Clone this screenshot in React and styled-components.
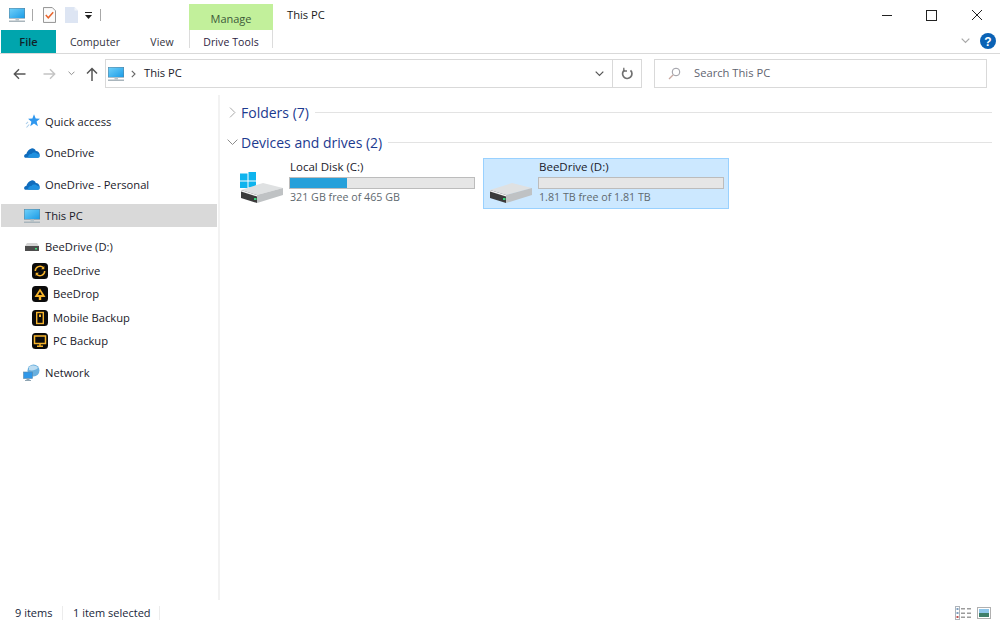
import React from "react";
import styled, { createGlobalStyle } from "styled-components";

const Global = createGlobalStyle`
  html, body { margin: 0; padding: 0; background: #fff; }
  #root { width: 1000px; height: 625px; overflow: hidden; }
  * { box-sizing: border-box; }
`;

const Window = styled.div`
  width: 1000px; height: 625px; display: flex; flex-direction: column; background: #fff;
  font-family: "Open Sans", "Noto Sans", sans-serif; font-size: 11.2px; color: #1a1a2a;
`;
const TitleRow = styled.div`height: 30px; padding-top: 4px; display: flex; align-items: stretch;`;
const Qat = styled.div`width: 189px; display: flex; align-items: center; padding: 0 0 4px 8px;`;
const QatSep = styled.span`width: 1px; height: 12px; background: #a8a8a8; margin: ${p => p.$m};`;
const Manage = styled.div`width: 84px; background: #c2f09b; color: #3d5a3a; display: flex; align-items: center; justify-content: center; padding-top: 2px; font-size: 11px;`;
const Title = styled.div`margin-left: 14px; color: #1a1a1a; padding-top: 1px; line-height: 20px; flex: 1;`;
const WinControls = styled.div`display: flex; padding: 1px 17px 0 0; gap: 34px; align-items: flex-start;`;
const TabRow = styled.div`height: 24px; display: flex; align-items: flex-start; border-bottom: 1px solid #d9d9d9; padding-left: 1px;`;
const FileTab = styled.div`width: 55px; height: 23px; background: #00a5ad; color: #10222a; font-weight: 600; display: flex; align-items: center; justify-content: center; font-size: 11px;`;
const Tab = styled.div`width: ${p => p.$w}px; height: 23px; display: flex; align-items: center; justify-content: center; font-size: 10.5px; color: #333340; letter-spacing: .1px; padding-left: ${p => p.$pl || 0}px;`;
const ActiveTab = styled(Tab)`
  height: 18px; padding-top: 6px; border-left: 1px solid #dcdcdc; border-right: 1px solid #dcdcdc; color: #2c2440;
`;
const RibbonRight = styled.div`margin-left: auto; display: flex; align-items: center; height: 22px; padding-right: 4px; gap: 10px;`;
const NavRow = styled.div`height: 41px; padding: 5px 13px 0 0; display: flex; align-items: flex-start;`;
const NavButtons = styled.div`width: 105px; height: 29px; display: flex; align-items: center; padding-left: 13px;`;
const NavGap = styled.span`width: ${p => p.$w}px; flex: none;`;
const Address = styled.div`width: 537px; height: 29px; border: 1px solid #d9d9d9; display: flex; align-items: center; padding-left: 1px;`;
const Crumb = styled.span`color: #1a1a2a; flex: 1; margin-left: 9px; padding-bottom: 2px; margin-left: 8px;`;
const AddrBtn = styled.div`width: ${p => p.$w}px; height: 100%; display: flex; align-items: center; justify-content: center; border-left: ${p => p.$b ? "1px solid #d9d9d9" : "0"};`;
const Search = styled.div`margin-left: 12px; width: 333px; height: 29px; border: 1px solid #d9d9d9; display: flex; align-items: center; padding-left: 13px; gap: 13px; color: #5f6470;`;
const SearchText = styled.span`padding-bottom: 2px;`;
const Main = styled.div`flex: 1; display: flex; min-height: 0;`;
const Sidebar = styled.nav`width: 220px; border-right: 2px solid #f2f2f2; padding: 15px 0 0 1px; display: flex; flex-direction: column;`;
const NavItem = styled.div`
  height: 23px; width: 216px; margin-top: ${p => p.$mt || 0}px; display: flex; align-items: center; gap: 4px;
  padding-left: ${p => p.$child ? 30 : 22}px; background: ${p => p.$active ? "#d9d9d9" : "transparent"}; color: #1a1a2a; white-space: nowrap; flex: none;
`;
const IconSlot = styled.span`width: 18px; height: 18px; display: flex; align-items: center; justify-content: center; flex: none;`;
const Content = styled.main`flex: 1; padding: 0 8px 0 7px; min-width: 0;`;
const Group = styled.div`height: ${p => p.$h}px; display: flex; align-items: center; gap: 3px; padding-top: ${p => p.$pt || 0}px;`;
const GroupLabel = styled.span`color: #1c3a8f; font-size: 14px; white-space: nowrap; margin-right: 3px;`;
const GroupLine = styled.span`flex: 1; height: 1px; background: #e3e3e3;`;
const Tiles = styled.div`display: flex; align-items: flex-start; padding: 1px 0 0 7px; gap: 3px;`;
const TileBox = styled.div`
  width: 246px; height: 51px; display: flex; padding: 7px 4px 0 5px; gap: 5px;
  background: ${p => p.$sel ? "#cce8ff" : "transparent"};
  border: 1px solid ${p => p.$sel ? "#99d1ff" : "transparent"};
`;
const TileIcon = styled.div`width: 44px; display: flex; align-items: flex-end; justify-content: center; padding-bottom: 2px; flex: none;`;
const TileBody = styled.div`flex: 1; display: flex; flex-direction: column; min-width: 0;`;
const TileName = styled.div`color: #1a1a2a; line-height: 15px; margin-top: -7px; margin-left: 1px; font-size: 11.5px; padding-bottom: 1px;`;
const Bar = styled.div`height: 12px; margin-top: 2px; background: #e6e6e6; border: 1px solid #bcbcbc; display: flex; flex: none;`;
const BarFill = styled.div`background: #26a0da; height: 100%;`;
const TileInfo = styled.div`color: #5f6a6f; line-height: 15px; margin-top: 1px; margin-left: 1px; font-size: 10.7px;`;
const Status = styled.footer`height: 25px; display: flex; align-items: center; padding: 1px 9px 0 15px; color: #20263a; font-size: 11px;`;
const StatusItem = styled.span`padding-right: 10px; border-right: 1px solid #ececec; margin-right: 10px; line-height: 14px; width: ${p => p.$w}px; white-space: nowrap; flex: none;`;
const ViewIcons = styled.div`margin-left: auto; display: flex; gap: 5px; align-items: center;`;

const Pc = ({ s = 18 }) => (
  <svg width={s} height={s} viewBox="0 0 18 18">
    <defs><linearGradient id="sc" x1="0" y1="0" x2="1" y2="1"><stop offset="0" stopColor="#6fd0fa" /><stop offset="1" stopColor="#1c9ce6" /></linearGradient></defs>
    <rect x="1" y="2" width="16" height="10.500" fill="#5c7f96" />
    <rect x="1.500" y="2.500" width="15" height="9.500" fill="url(#sc)" />
    <rect x="7.500" y="12.500" width="3.500" height="2" fill="#b6c3ca" />
    <rect x="1" y="14.500" width="16" height="1.500" fill="#a9b5bc" />
  </svg>
);
const Check = () => (
  <svg width="13" height="16" viewBox="0 0 14 17">
    <path d="M.5.5h9.500l3.500 3.500v12.500H.5z" fill="#fbfbfb" stroke="#8b8b8b" />
    <path d="M3 8.500l2.700 3L11 5.500" fill="none" stroke="#e8642c" strokeWidth="1.600" />
  </svg>
);
const Blank = () => (
  <svg width="13" height="16" viewBox="0 0 13 16">
    <path d="M0 0h9.500L13 3.500V16H0z" fill="#dde5f3" />
    <path d="M9.500 0v3.500H13" fill="#f2f5fa" />
  </svg>
);
const QatDrop = () => (
  <svg width="9" height="9" viewBox="0 0 9 9"><rect x="1" y="1" width="7" height="1" fill="#222" /><path d="M1 4h7L4.500 8z" fill="#222" /></svg>
);
const Min = () => <svg width="11" height="20" viewBox="0 0 11 20"><rect x="1" y="10" width="10" height="1" fill="#222" /></svg>;
const Max = () => <svg width="11" height="20" viewBox="0 0 11 20"><rect x=".5" y="5.500" width="10" height="10" fill="none" stroke="#222" /></svg>;
const Close = () => <svg width="12" height="20" viewBox="0 0 12 20"><path d="M1 5l10 10M11 5L1 15" stroke="#222" strokeWidth="1" fill="none" /></svg>;
const Chev = ({ c = "#888", w = 9, h = 6 }) => <svg width={w} height={h} viewBox="0 0 9 6"><path d="M.7.700L4.500 4.500 8.300.700" fill="none" stroke={c} strokeWidth="1.200" /></svg>;
const Help = () => (
  <svg width="16" height="16" viewBox="0 0 16 16"><circle cx="8" cy="8" r="8" fill="#0a62b5" /><text x="8" y="12.500" textAnchor="middle" fontFamily="Liberation Sans" fontSize="12" fontWeight="700" fill="#fff">?</text></svg>
);
const Arrow = ({ c, flip }) => (
  <svg width="13" height="12" viewBox="0 0 13 12" style={flip ? { transform: "scaleX(-1)" } : undefined}>
    <path d="M12.500 6H1.500M6 1.300L1.300 6 6 10.700" fill="none" stroke={c} strokeWidth="1.400" />
  </svg>
);
const Up = () => <svg width="12" height="14" viewBox="0 0 12 14"><path d="M6 14V1.500M1 6.500l5-5 5 5" fill="none" stroke="#555" strokeWidth="1.500" /></svg>;
const CrumbChev = () => <svg width="5" height="8" viewBox="0 0 5 8"><path d="M.8.800L4 4 .8 7.200" fill="none" stroke="#666" strokeWidth="1.100" /></svg>;
const Refresh = () => (
  <svg width="12" height="13" viewBox="0 0 12 13"><path d="M3.500 3A4.700 4.700 0 1 0 9.500 3.400" fill="none" stroke="#707070" strokeWidth="1.700" /><path d="M2.800.8v3.200H6" fill="none" stroke="#707070" strokeWidth="1.300" /></svg>
);
const Lens = () => (
  <svg width="13" height="13" viewBox="0 0 13 13"><circle cx="8" cy="5" r="3.800" fill="none" stroke="#9a9aa2" /><path d="M5 8l-4 4" stroke="#c9a8a0" strokeWidth="1.200" /></svg>
);
const Star = () => (
  <svg width="15" height="15" viewBox="0 0 15 15"><path d="M9 .3l1.700 4.200 4.300.2-3.400 2.800 1.300 4.700L9 9.600l-3.700 2.600L6.400 7.700 3.100 4.700l4.300-.2z" fill="#2f97ee" /><path d="M3 7.800L1 10M4.200 10.500l-2.700 3" stroke="#a9cdea" strokeWidth="1.100" /></svg>
);
const Cloud = () => (
  <svg width="16" height="10" viewBox="0 0 16 10"><path d="M1.800 9.800A1.800 1.800 0 0 1 .3 7.200c.4-.8 1.200-1.200 2-1.100C2.900 3.200 5 1 7.500.4c2-.3 3.700.8 4.300 2.500 2-.1 3.700 1.600 3.900 3.500.2 1.900-.9 3.400-2.200 3.400z" fill="#0f6cbd" /><path d="M4.500 9.800c-1-2 .6-4 3-3.900 1-1.600 4-2 5.800-.1 1.500.1 2.400 1.500 2.400 2.800 0 .7-.4 1.200-1.200 1.200z" fill="#1e90e0" /></svg>
);
const SmallDrive = () => (
  <svg width="14" height="8" viewBox="0 0 14 8"><path d="M2 0h10l2 3H0z" fill="#d4d4d4" /><rect y="3" width="14" height="5" fill="#4d4d4d" /><rect x="10" y="5" width="2" height="1.500" fill="#3ee07a" /></svg>
);
const Bee = ({ children }) => (
  <svg width="16" height="16" viewBox="0 0 16 16"><rect width="16" height="16" rx="3.500" fill="#0b0b0b" />{children}</svg>
);
const BeeSync = () => <Bee><path d="M3.300 8a4.700 4.700 0 0 1 8.100-3.200M12.700 8a4.700 4.700 0 0 1-8.100 3.200" fill="none" stroke="#f7b52c" strokeWidth="1.500" /><path d="M12.300 3v3.200H9.100M3.700 13V9.800h3.200" fill="#f7b52c" /></Bee>;
const BeeDrop = () => <Bee><path d="M8 2.500l5.500 8.500h-4.300V14H6.800v-3H2.500z" fill="#f7b52c" /><path d="M8 5.500l2 3.500H6z" fill="#0b0b0b" /></Bee>;
const BeeMobile = () => <Bee><rect x="4.700" y="2.500" width="6.600" height="11" fill="none" stroke="#f7b52c" strokeWidth="1.400" /><rect x="7" y="4.500" width="2" height="2.500" fill="#f7b52c" /></Bee>;
const BeePc = () => <Bee><rect x="2.500" y="3" width="11" height="7.500" fill="none" stroke="#f7b52c" strokeWidth="1.500" /><path d="M8 10.500V13M5 13.200h6" stroke="#f7b52c" strokeWidth="1.400" /></Bee>;
const Network = () => (
  <svg width="18" height="18" viewBox="0 0 18 18">
    <circle cx="10.500" cy="6.500" r="6" fill="#6ab0de" /><path d="M6 3c3-2 7-2 9 1-2 2-6 3-9 2z" fill="#bcdcf1" />
    <rect x="0.500" y="8" width="9" height="6.500" fill="#2f97e8" stroke="#5a87a8" strokeWidth=".6" />
    <rect x="3.500" y="14.500" width="3" height="1.500" fill="#8fa5b3" /><rect x="2" y="16" width="6" height="1" fill="#8fa5b3" />
  </svg>
);
const HardDisk = ({ win }) => (
  <svg width="44" height={win ? 34 : 24} viewBox={win ? "0 0 44 34" : "0 10 44 24"}>
    {win && <g fill="#0fb4ee"><rect x="0" y="1.500" width="7.500" height="7" /><rect x="8.500" y="0" width="7.500" height="8.500" /><rect x="0" y="9.500" width="7.500" height="6.500" /><rect x="8.500" y="9.500" width="7.500" height="6" /></g>}
    <path d="M1 18l22-7 20 5-26 7z" fill="#dfe1e2" />
    <path d="M17 23l26-7v7l-26 8z" fill="#bfc2c4" />
    <path d="M1 18l16 5v8L1 26z" fill="#3b3b3b" />
    <path d="M1 18l16 5v1.500L1 19.500z" fill="#f4f4f4" />
    <rect x="14" y="26" width="2.500" height="2" fill="#37d67a" />
  </svg>
);
const Details = () => (
  <svg width="17" height="14" viewBox="0 0 17 14">
    <rect x=".5" y=".5" width="4" height="13" fill="#fff" stroke="#aeb4ba" />
    <rect x="1.500" y="2" width="2" height="2" fill="#7f9fc0" /><rect x="1.500" y="6" width="2" height="2" fill="#7f9fc0" /><rect x="1.500" y="10" width="2" height="2" fill="#c05050" />
    <g fill="#9c9c9c"><rect x="6" y="2" width="4" height="1.500" /><rect x="12" y="2" width="4" height="1.500" /><rect x="6" y="6.500" width="4" height="1.500" /><rect x="12" y="6.500" width="4" height="1.500" /><rect x="6" y="10.500" width="4" height="1.500" /><rect x="12" y="10.500" width="4" height="1.500" /></g>
  </svg>
);
const Large = () => (
  <svg width="14" height="12" viewBox="0 0 14 12">
    <rect x=".5" y=".5" width="13" height="11" fill="#fff" stroke="#b0b0b0" />
    <rect x="2" y="2" width="10" height="4" fill="#8ec6ea" /><rect x="2" y="6" width="10" height="4" fill="#3f7f6a" />
  </svg>
);
const SideChev = ({ open }) => open
  ? <svg width="11" height="7" viewBox="0 0 11 7"><path d="M.6.600l4.900 4.900L10.400.600" fill="none" stroke="#8c8c8c" /></svg>
  : <svg width="11" height="11" viewBox="0 0 11 11"><path d="M3 .600l4.900 4.900L3 10.400" fill="none" stroke="#a8a8a8" /></svg>;

const navItems = [
  { label: "Quick access", icon: <Star /> },
  { label: "OneDrive", icon: <Cloud />, mt: 8 },
  { label: "OneDrive - Personal", icon: <Cloud />, mt: 9 },
  { label: "This PC", icon: <Pc />, mt: 8, active: true },
  { label: "BeeDrive (D:)", icon: <SmallDrive />, mt: 8 },
  { label: "BeeDrive", icon: <BeeSync />, child: true, mt: 1 },
  { label: "BeeDrop", icon: <BeeDrop />, child: true },
  { label: "Mobile Backup", icon: <BeeMobile />, child: true, mt: 1 },
  { label: "PC Backup", icon: <BeePc />, child: true },
  { label: "Network", icon: <Network />, mt: 9 },
];

const Tile = ({ win, sel, name, pct, info }) => (
  <TileBox $sel={sel}>
    <TileIcon><HardDisk win={win} /></TileIcon>
    <TileBody>
      <TileName>{name}</TileName>
      <Bar>{pct > 0 && <BarFill style={{ width: `${pct}%` }} />}</Bar>
      <TileInfo>{info}</TileInfo>
    </TileBody>
  </TileBox>
);

export default function App() {
  return (
    <Window>
      <Global />
      <TitleRow>
        <Qat>
          <Pc />
          <QatSep $m="0 10px 0 6px" />
          <Check />
          <NavGap $w={9} />
          <Blank />
          <NavGap $w={6} />
          <QatDrop />
          <QatSep $m="0 0 0 7px" />
        </Qat>
        <Manage>Manage</Manage>
        <Title>This PC</Title>
        <WinControls><Min /><Max /><Close /></WinControls>
      </TitleRow>
      <TabRow>
        <FileTab>File</FileTab>
        <Tab $w={78}>Computer</Tab>
        <Tab $w={55} $pl={1}>View</Tab>
        <ActiveTab $w={84}>Drive Tools</ActiveTab>
        <RibbonRight><Chev c="#a8a8a8" /><Help /></RibbonRight>
      </TabRow>
      <NavRow>
        <NavButtons>
          <Arrow c="#555" />
          <NavGap $w={17} />
          <Arrow c="#c4c4c4" flip />
          <NavGap $w={12} />
          <Chev c="#888" w={7} h={5} />
          <NavGap $w={11} />
          <Up />
        </NavButtons>
        <Address>
          <Pc />
          <NavGap $w={6} />
          <CrumbChev />
          <Crumb>This PC</Crumb>
          <AddrBtn $w={25}><Chev c="#555" /></AddrBtn>
          <AddrBtn $w={29} $b><Refresh /></AddrBtn>
        </Address>
        <Search><Lens /><SearchText>Search This PC</SearchText></Search>
      </NavRow>
      <Main>
        <Sidebar>
          {navItems.map(n => (
            <NavItem key={n.label} $mt={n.mt} $child={n.child} $active={n.active}>
              <IconSlot>{n.icon}</IconSlot>{n.label}
            </NavItem>
          ))}
        </Sidebar>
        <Content>
          <Group $h={31} $pt={3}><SideChev /><GroupLabel>Folders (7)</GroupLabel><GroupLine /></Group>
          <Group $h={31} $pt={1}><SideChev open /><GroupLabel>Devices and drives (2)</GroupLabel><GroupLine /></Group>
          <Tiles>
            <Tile win name="Local Disk (C:)" pct={31} info="321 GB free of 465 GB" />
            <Tile sel name="BeeDrive (D:)" pct={0} info="1.81 TB free of 1.81 TB" />
          </Tiles>
        </Content>
      </Main>
      <Status>
        <StatusItem $w={48}>9 items</StatusItem>
        <StatusItem $w={87}>1 item selected</StatusItem>
        <ViewIcons><Details /><Large /></ViewIcons>
      </Status>
    </Window>
  );
}
